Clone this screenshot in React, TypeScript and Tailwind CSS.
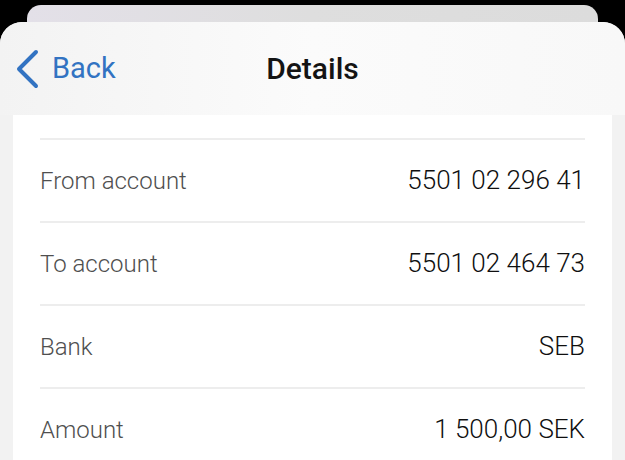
const rows = [
  { label: "From account", value: "5501 02 296 41" },
  { label: "To account", value: "5501 02 464 73" },
  { label: "Bank", value: "SEB" },
  { label: "Amount", value: "1 500,00 SEK" },
];

export default function App() {
  return (
    <div className="w-[625px] h-[460px] overflow-hidden bg-black font-['Roboto',sans-serif]">
      {/* window behind */}
      <div className="mx-[27px] mt-[5px] h-[17px] rounded-t-[14px] bg-gradient-to-r from-[#e3e0e8] via-[#dedede] to-[#dcdcdc]" />

      <div className="h-[438px] rounded-t-[22px] bg-[#f2f2f2] overflow-hidden">
        <div className="relative flex h-[93px] items-center bg-gradient-to-r from-[#f3f3f3] via-[#fbfbfb] to-[#f8f8f8]">
          <div className="flex items-center pl-[14px] text-[#3273c2]">
            <svg width="26" height="40" viewBox="0 0 26 40" fill="none">
              <path d="M22 3 L5 20 L22 37" stroke="currentColor" strokeWidth="4" strokeLinecap="round" strokeLinejoin="round" />
            </svg>
            <span className="ml-[12px] text-[29px] leading-none">Back</span>
          </div>
          <div className="absolute inset-x-0 text-center text-[30px] font-medium leading-none text-[#141414] pointer-events-none">
            Details
          </div>
        </div>

        <div className="mx-[13px] bg-white px-[27px] pt-[23px]">
          {rows.map((r) => (
            <div key={r.label}>
              <div className="h-[2px] bg-[#ededed]" />
              <div className="flex h-[81px] items-center justify-between">
                <span className="text-[24px] font-light text-[#4f4f4f]">{r.label}</span>
                <span className="text-[26px] font-light text-[#0f0f0f]">{r.value}</span>
              </div>
            </div>
          ))}
        </div>
      </div>
    </div>
  );
}
